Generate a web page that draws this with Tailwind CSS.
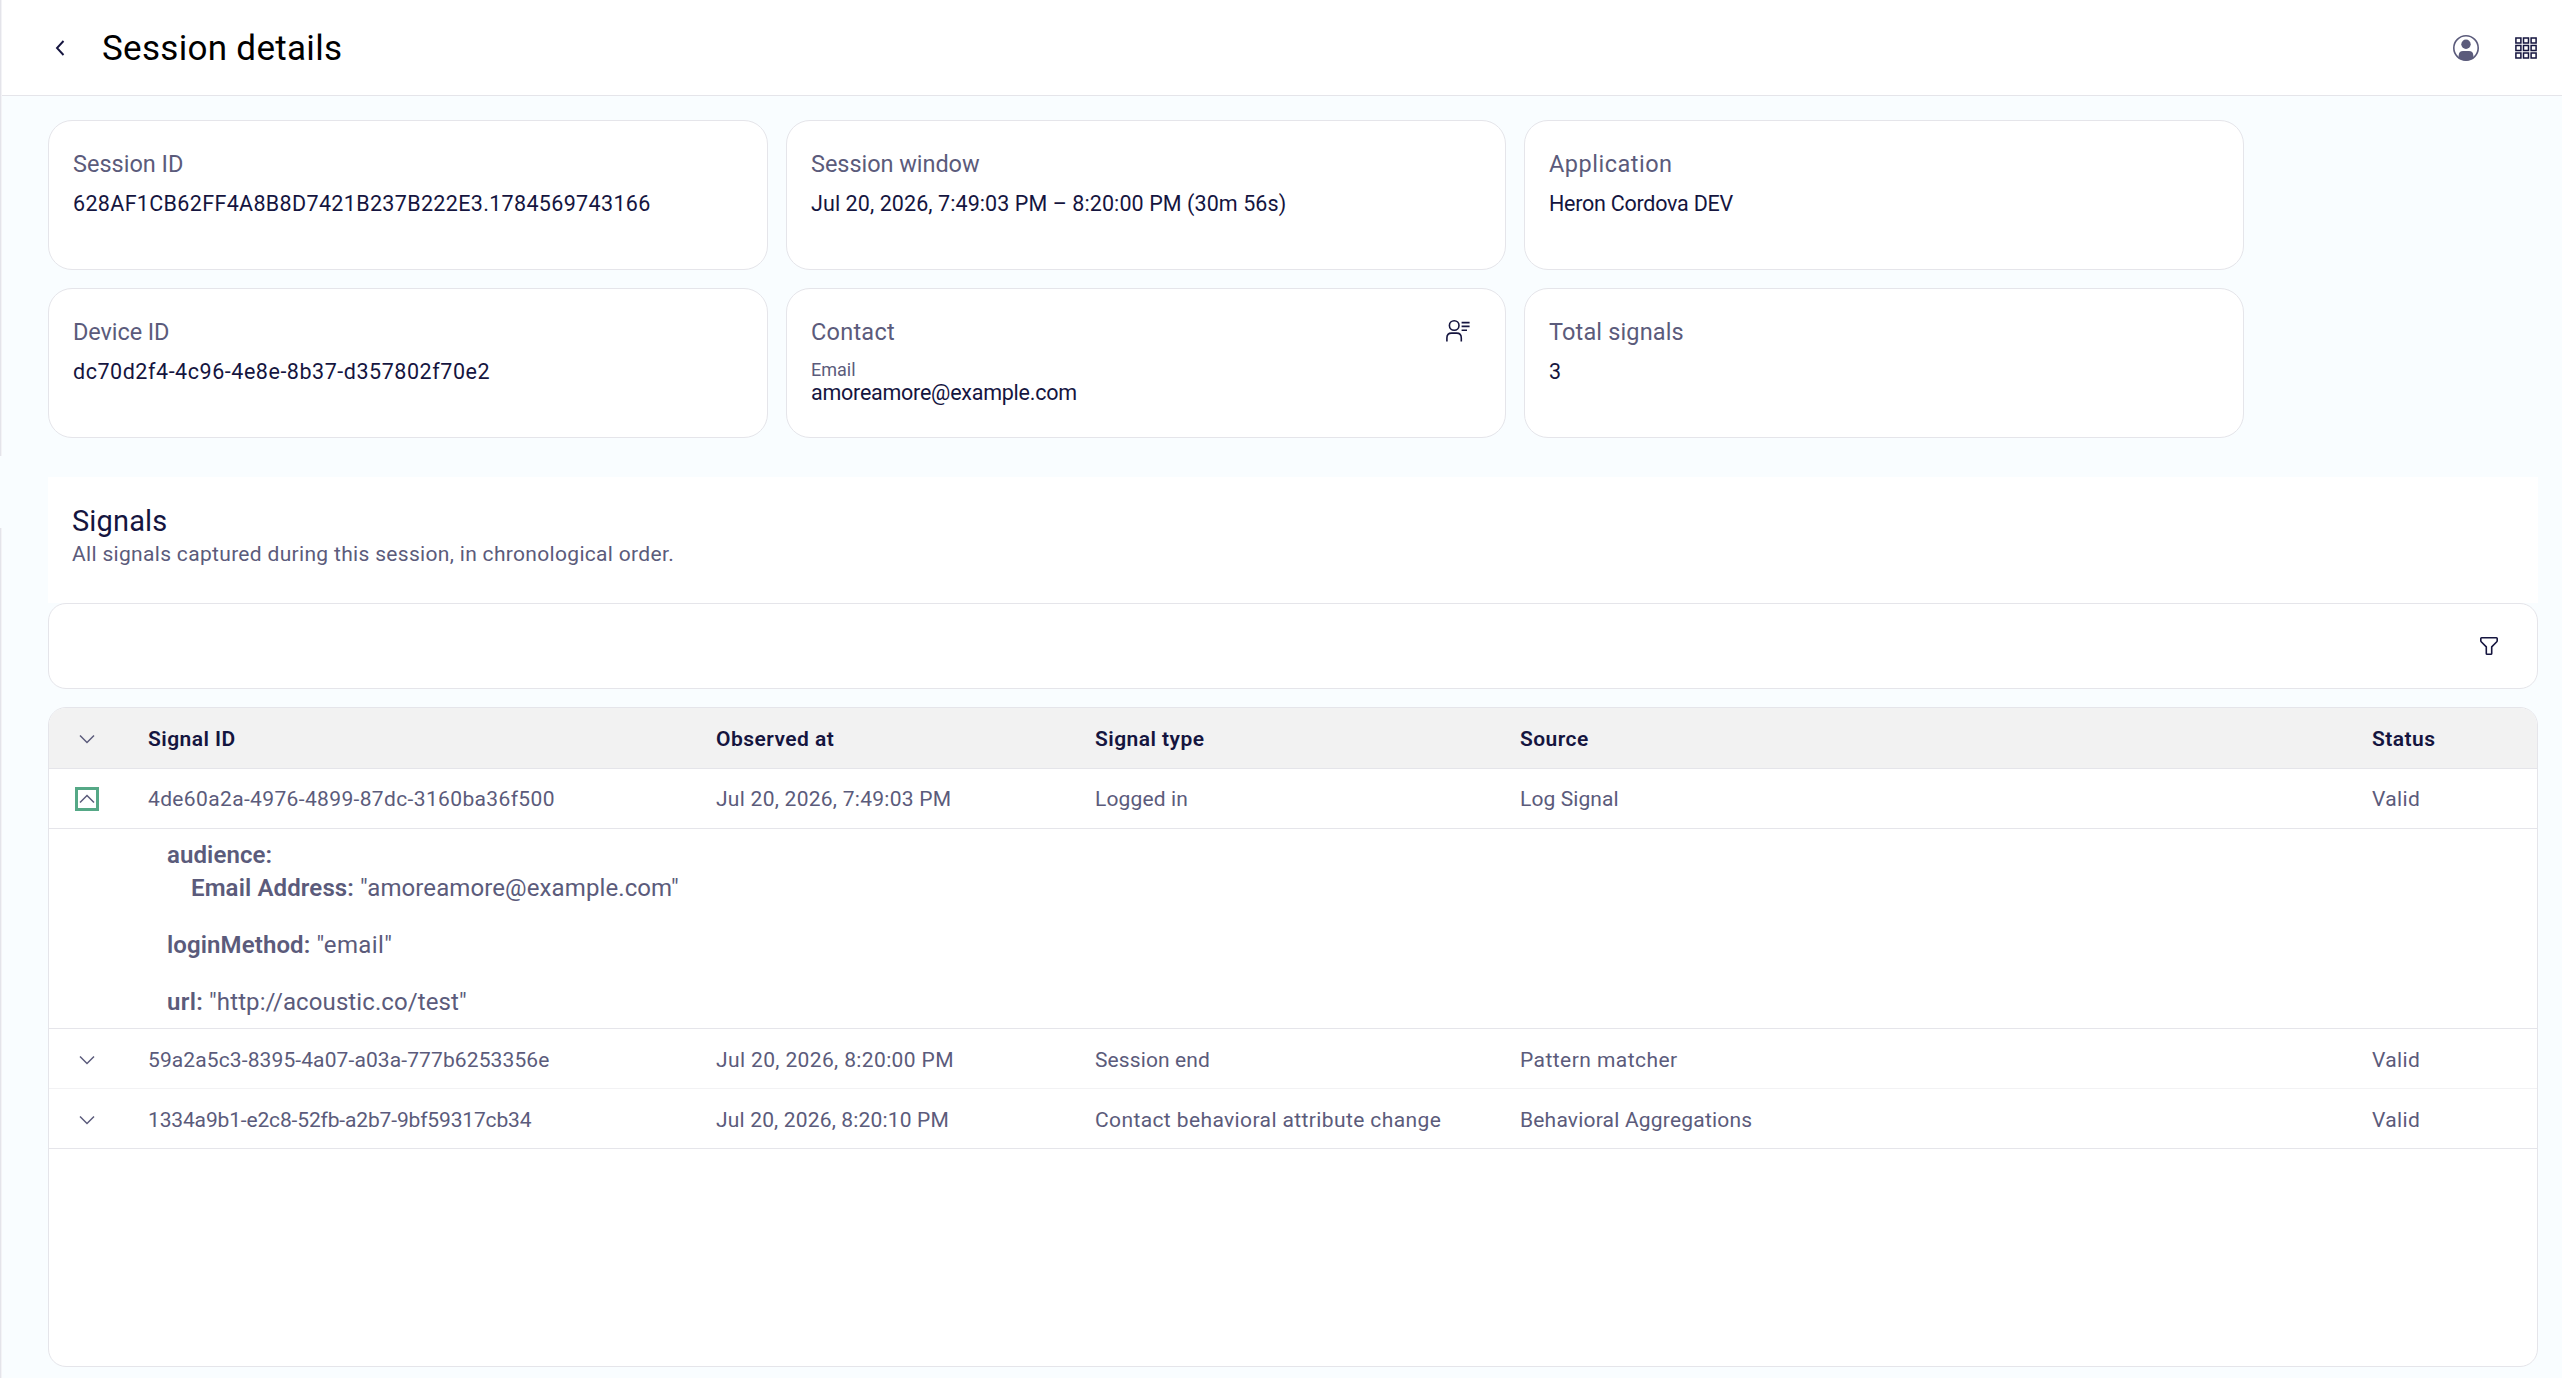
<!DOCTYPE html>
<html lang="en">
<head>
  <meta charset="UTF-8">
  <title>Session details</title>
  <meta name="viewport" content="width=device-width, initial-scale=1.0">
  <script src="https://cdn.jsdelivr.net/npm/@tailwindcss/browser@4"></script>
</head>
<body class="h-screen flex overflow-hidden bg-[#f9fdff] font-['Roboto','Noto_Sans',sans-serif] text-[#5b5b7b]">
  <!-- Sidebar edge -->
  <div class="w-[2px] shrink-0 flex flex-col gap-[72px]">
    <div class="h-[456px] shrink-0 border-l border-[#e4e4ea] bg-[#f3f3f6]"></div>
    <div class="flex-1 border-l border-[#e4e4ea] bg-[#f3f3f6]"></div>
  </div>

  <div class="flex-1 flex flex-col min-w-0">
    <!-- Header -->
    <header class="h-24 shrink-0 flex items-center bg-white border-b border-[#e5e5ea] pl-[46px] pr-[25px]">
      <button class="w-6 h-6 flex items-center justify-center">
        <svg class="w-6 h-6" viewBox="0 0 24 24" fill="none" stroke="#15153f" stroke-width="1.9"><path d="M15.500 5 L9 12 L15.500 19"/></svg>
      </button>
      <h1 class="ml-[30px] mt-[2px] text-[35px] leading-[48px] tracking-[0.3px] text-black">Session details</h1>
      <div class="ml-auto flex items-center gap-9">
        <svg class="w-[26px] h-[26px]" viewBox="0 0 26 26">
          <circle cx="13" cy="13" r="12.200" fill="none" stroke="#5b5b7b" stroke-width="1.6"/>
          <circle cx="13" cy="9.3" r="4.7" fill="#5b5b7b"/>
          <path d="M5.700 23.3V20.300c0-2.800 1.700-4.300 4.300-4.300h6c2.600 0 4.300 1.500 4.300 4.300v3A12.600 12.600 0 0 1 5.700 23.300z" fill="#5b5b7b"/>
        </svg>
        <svg class="w-[22px] h-[22px]" viewBox="0 0 22 22" fill="none" stroke="#15153f" stroke-width="1.5">
          <path d="M.9.9h5v5h-5zM8.500.9h5v5h-5zM16.100.9h5v5h-5zM.9 8.500h5v5h-5zM8.500 8.500h5v5h-5zM16.100 8.500h5v5h-5zM.9 16.100h5v5h-5zM8.500 16.100h5v5h-5zM16.100 16.100h5v5h-5z"/>
        </svg>
      </div>
    </header>

    <main class="flex-1 min-h-0 flex flex-col pl-[46px] pr-6 pt-6 pb-[11px]">
      <!-- Summary cards -->
      <section class="grid grid-cols-[720px_720px_720px] auto-rows-[150px] gap-[18px]">
        <div class="bg-white border border-[#e5e5ea] rounded-3xl px-6 pt-[25px]">
          <h2 class="text-[23.5px] leading-9">Session ID</h2>
          <p class="mt-[7px] text-[21.500px] leading-[30px] tracking-[0.34px] text-[#15153f]">628AF1CB62FF4A8B8D7421B237B222E3.1784569743166</p>
        </div>
        <div class="bg-white border border-[#e5e5ea] rounded-3xl px-6 pt-[25px]">
          <h2 class="text-[23.5px] leading-9 tracking-[-0.05px]">Session window</h2>
          <p class="mt-[7px] text-[21.500px] leading-[30px] tracking-[0.08px] text-[#15153f]">Jul 20, 2026, 7:49:03 PM – 8:20:00 PM (30m 56s)</p>
        </div>
        <div class="bg-white border border-[#e5e5ea] rounded-3xl px-6 pt-[25px]">
          <h2 class="text-[23.5px] leading-9 tracking-[0.5px]">Application</h2>
          <p class="mt-[7px] text-[21.500px] leading-[30px] tracking-[-0.25px] text-[#15153f]">Heron Cordova DEV</p>
        </div>
        <div class="bg-white border border-[#e5e5ea] rounded-3xl px-6 pt-[25px]">
          <h2 class="text-[23.5px] leading-9 tracking-[-0.1px]">Device ID</h2>
          <p class="mt-[7px] text-[21.500px] leading-[30px] tracking-[0.54px] text-[#15153f]">dc70d2f4-4c96-4e8e-8b37-d357802f70e2</p>
        </div>
        <div class="bg-white border border-[#e5e5ea] rounded-3xl px-6 pt-[25px]">
          <div class="flex items-center justify-between pr-[11px]">
            <h2 class="text-[23.5px] leading-9 tracking-[0.25px]">Contact</h2>
            <svg class="w-6 h-6 mb-[2px]" viewBox="0 0 24 24" fill="none" stroke="#15153f" stroke-width="1.6">
              <circle cx="8.200" cy="6.500" r="4.800"/>
              <path d="M.9 22.500v-3.600c0-3 1.700-4.800 4.600-4.800h5.200c2.900 0 4.600 1.800 4.600 4.800v3.600M15.600 3.600h8M15.600 7.400h8M15.600 11.200h5.400"/>
            </svg>
          </div>
          <p class="mt-[9px] text-lg leading-[22px]">Email</p>
          <p class="text-[21.500px] leading-6 tracking-[-0.25px] text-[#15153f]">amoreamore@example.com</p>
        </div>
        <div class="bg-white border border-[#e5e5ea] rounded-3xl px-6 pt-[25px]">
          <h2 class="text-[23.5px] leading-9 tracking-[0.15px]">Total signals</h2>
          <p class="mt-[7px] text-[21.500px] leading-[30px] text-[#15153f]">3</p>
        </div>
      </section>

      <!-- Signals heading -->
      <section class="mt-[39px] h-[126px] shrink-0 bg-white px-6 pt-6">
        <h2 class="text-[29px] leading-10 tracking-[0.15px] text-[#15153f]">Signals</h2>
        <p class="text-[21px] leading-[26px] tracking-[0.32px]">All signals captured during this session, in chronological order.</p>
      </section>

      <!-- Filter bar -->
      <div class="h-[86px] shrink-0 flex items-center justify-end bg-white border border-[#e5e5ea] rounded-[18px] pr-[38px]">
        <svg class="w-5 h-5" viewBox="0 0 20 20" fill="none" stroke="#15153f" stroke-width="1.6" stroke-linejoin="round">
          <path d="M2.600 1.800h14.800q.8 0 .8.8v2.200q0 .6-.4 1L12.700 10.900v6.500q0 .8-.8.8H8.100q-.8 0-.8-.8v-6.500L2.200 5.800q-.4-.4-.4-1V2.600q0-.8.8-.8z"/>
        </svg>
      </div>

      <!-- Signals table -->
      <section class="mt-[18px] flex-1 bg-white border border-[#e5e5ea] rounded-[18px] overflow-hidden text-[21px] leading-[30px]">
        <div class="h-[61px] grid grid-cols-[99px_568px_379px_425px_852px_1fr] items-center bg-[#f2f2f2] border-b border-[#e5e5ea] pt-[2px] font-semibold tracking-[0.45px] text-[#15153f]">
          <svg class="ml-[30px] w-4 h-4" viewBox="0 0 16 16" fill="none" stroke="#5b5b7b" stroke-width="1.5"><path d="M1 4.500 8 11.500 15 4.500"/></svg>
          <span>Signal ID</span>
          <span>Observed at</span>
          <span>Signal type</span>
          <span>Source</span>
          <span>Status</span>
        </div>

        <div class="h-[60px] grid grid-cols-[99px_568px_379px_425px_852px_1fr] items-center border-b border-[#e5e5ea]">
          <span class="ml-[26px] w-6 h-6 flex items-center justify-center border-[3px] border-[#55a886]">
            <svg class="w-4 h-4 shrink-0" viewBox="0 0 16 16" fill="none" stroke="#5b5b7b" stroke-width="1.5"><path d="M1 11.500 8 4.500 15 11.500"/></svg>
          </span>
          <span class="tracking-[0.36px]">4de60a2a-4976-4899-87dc-3160ba36f500</span>
          <span class="tracking-[0.27px]">Jul 20, 2026, 7:49:03 PM</span>
          <span class="tracking-[0.15px]">Logged in</span>
          <span class="tracking-[0.1px]">Log Signal</span>
          <span class="tracking-[0.38px]">Valid</span>
        </div>

        <!-- Expanded signal payload -->
        <div class="h-[200px] border-b border-[#e5e5ea] pl-[118px] pt-[10px] text-2xl leading-[33px] tracking-[0.1px]">
          <p class="font-semibold">audience:</p>
          <p class="pl-6"><span class="font-semibold tracking-[0.12px]">Email Address:</span> "amoreamore@example.com"</p>
          <p class="mt-6"><span class="font-semibold">loginMethod:</span> <span class="tracking-[0.4px]">"email"</span></p>
          <p class="mt-6"><span class="font-semibold tracking-[0.3px]">url:</span> "http://acoustic.co/test"</p>
        </div>

        <div class="h-[60px] grid grid-cols-[99px_568px_379px_425px_852px_1fr] items-center border-b border-[#f2f2f4] pt-[2px]">
          <svg class="ml-[30px] w-4 h-4" viewBox="0 0 16 16" fill="none" stroke="#5b5b7b" stroke-width="1.5"><path d="M1 4.500 8 11.500 15 4.500"/></svg>
          <span class="tracking-[0.11px]">59a2a5c3-8395-4a07-a03a-777b6253356e</span>
          <span class="tracking-[0.37px]">Jul 20, 2026, 8:20:00 PM</span>
          <span class="tracking-[0.1px]">Session end</span>
          <span class="tracking-[0.45px]">Pattern matcher</span>
          <span class="tracking-[0.38px]">Valid</span>
        </div>

        <div class="h-[60px] grid grid-cols-[99px_568px_379px_425px_852px_1fr] items-center border-b border-[#e5e5ea] pt-[2px]">
          <svg class="ml-[30px] w-4 h-4" viewBox="0 0 16 16" fill="none" stroke="#5b5b7b" stroke-width="1.5"><path d="M1 4.500 8 11.500 15 4.500"/></svg>
          <span class="tracking-[-0.15px]">1334a9b1-e2c8-52fb-a2b7-9bf59317cb34</span>
          <span class="tracking-[0.17px]">Jul 20, 2026, 8:20:10 PM</span>
          <span class="tracking-[0.39px]">Contact behavioral attribute change</span>
          <span class="tracking-[0.2px]">Behavioral Aggregations</span>
          <span class="tracking-[0.38px]">Valid</span>
        </div>
      </section>
    </main>
  </div>
</body>
</html>
